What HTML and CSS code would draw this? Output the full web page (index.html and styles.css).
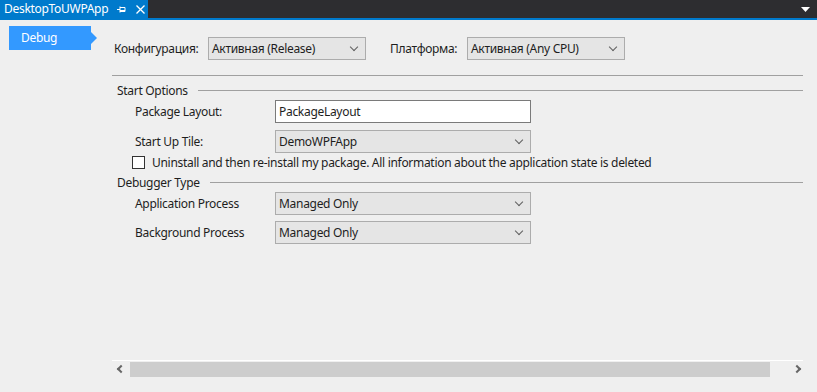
FILE: index.html
```html
<!DOCTYPE html>
<html lang="en">
<head>
    <meta charset="UTF-8">
    <meta name="viewport" content="width=device-width, initial-scale=1.0">
    <title>DesktopToUWPApp</title>
    <link rel="stylesheet" href="styles.css">
</head>
<body>
    <div class="tab-bar">
        <div class="doc-tab">
            <span class="doc-title">DesktopToUWPApp</span>
            <svg class="pin" width="9" height="9" viewBox="0 0 9 9">
                <path d="M0 4.5H3M3 1.5V7.5M3 2.5H8V6.5H3M3 5.5H8" stroke="#fff" stroke-width="1" fill="none"/>
            </svg>
            <svg class="close" width="9" height="9" viewBox="0 0 9 9">
                <path d="M0.5 0.5L8.5 8.5M8.5 0.5L0.5 8.5" stroke="#fff" stroke-width="1.3"/>
            </svg>
        </div>
        <div class="bar-fill">
            <svg class="menu-arrow" width="9" height="5" viewBox="0 0 9 5">
                <path d="M0 0H9L4.5 5Z" fill="#fff"/>
            </svg>
        </div>
    </div>
    <div class="tab-line"></div>

    <div class="page">
        <div class="sidebar">
            <div class="side-item">Debug</div>
        </div>

        <div class="content">
            <div class="config-row">
                <label class="config-label">Конфигурация:</label>
                <div class="select">Активная (Release)<span class="chev"></span></div>
                <label class="config-label platform">Платформа:</label>
                <div class="select">Активная (Any CPU)<span class="chev"></span></div>
            </div>
            <div class="rule"></div>

            <div class="group-head"><span>Start Options</span><div class="group-line"></div></div>
            <div class="field first">
                <label>Package Layout:</label>
                <div class="textbox">PackageLayout</div>
            </div>
            <div class="field">
                <label>Start Up Tile:</label>
                <div class="select wide">DemoWPFApp<span class="chev"></span></div>
            </div>
            <div class="check-row">
                <span class="checkbox"></span>
                <span>Uninstall and then re-install my package. All information about the application state is deleted</span>
            </div>

            <div class="group-head second"><span>Debugger Type</span><div class="group-line"></div></div>
            <div class="field first">
                <label>Application Process</label>
                <div class="select wide">Managed Only<span class="chev"></span></div>
            </div>
            <div class="field tight">
                <label>Background Process</label>
                <div class="select wide">Managed Only<span class="chev"></span></div>
            </div>

            <div class="spacer"></div>

            <div class="hscroll">
                <span class="arrow left"></span>
                <div class="thumb"></div>
                <span class="arrow right"></span>
            </div>
        </div>
    </div>
</body>
</html>
```

FILE: styles.css
```css
body {
    margin: 0;
    background-color: #efefef;
    font-family: "Noto Sans", "Open Sans", sans-serif;
    font-size: 12px;
    letter-spacing: -0.3px;
    color: #1e1e1e;
    height: 392px;
    overflow: hidden;
}
.tab-bar {
    display: flex;
    height: 18px;
}
.doc-tab {
    display: flex;
    align-items: center;
    width: 148px;
    background-color: #007acc;
    color: #fff;
    padding-left: 4px;
    box-sizing: border-box;
}
.doc-title {
    font-size: 12px;
    line-height: 18px;
}
.pin {
    margin-left: 9px;
}
.close {
    margin-left: 10px;
}
.bar-fill {
    flex: 1;
    background-color: #2d2d30;
    display: flex;
    align-items: center;
    justify-content: flex-end;
    padding-right: 7px;
}
.tab-line {
    height: 2px;
    background-color: #007acc;
}
.page {
    display: flex;
    height: 372px;
}
.sidebar {
    width: 112px;
    padding-top: 6px;
    padding-left: 9px;
    box-sizing: border-box;
}
.side-item {
    position: relative;
    width: 82px;
    height: 24px;
    line-height: 23px;
    background-color: #3399ff;
    color: #fff;
    padding-left: 12px;
    box-sizing: border-box;
    font-size: 12px;
}
.side-item::after {
    content: "";
    position: absolute;
    right: -6px;
    top: 6px;
    border-left: 6px solid #3399ff;
    border-top: 6px solid transparent;
    border-bottom: 6px solid transparent;
}
.content {
    width: 691px;
    display: flex;
    flex-direction: column;
}
.config-row {
    display: flex;
    align-items: center;
    margin-top: 17px;
    height: 23px;
}
.config-label {
    padding-left: 2px;
    width: 96px;
    box-sizing: border-box;
}
.config-label.platform {
    margin-left: 24px;
    width: 77px;
    padding-left: 0;
}
.select {
    position: relative;
    width: 158px;
    height: 23px;
    line-height: 21px;
    background-color: #e5e5e5;
    border: 1px solid #acacac;
    box-sizing: border-box;
    padding-left: 3px;
}
.select.wide {
    width: 256px;
}
.chev {
    position: absolute;
    right: 8px;
    top: 6px;
    width: 5px;
    height: 5px;
    border-right: 1px solid #5f5f5f;
    border-bottom: 1px solid #5f5f5f;
    transform: rotate(45deg);
}
.rule {
    height: 1px;
    background-color: #a0a0a0;
    margin-top: 15px;
}
.group-head {
    display: flex;
    align-items: center;
    height: 15px;
    margin-top: 7px;
    padding-left: 5px;
}
.group-head.second {
    margin-top: 6px;
}
.group-line {
    flex: 1;
    height: 1px;
    background-color: #a0a0a0;
    margin-left: 10px;
}
.field {
    display: flex;
    align-items: center;
    height: 23px;
    margin-top: 7px;
}
.field.first {
    margin-top: 2px;
}
.field.tight {
    margin-top: 6px;
}
.field label {
    width: 163px;
    padding-left: 23px;
    box-sizing: border-box;
}
.textbox {
    width: 256px;
    height: 23px;
    line-height: 21px;
    background-color: #fff;
    border: 1px solid #7a7a7a;
    box-sizing: border-box;
    padding-left: 3px;
}
.check-row {
    display: flex;
    align-items: center;
    height: 14px;
    margin-top: 2px;
    padding-left: 20px;
}
.checkbox {
    width: 11px;
    height: 11px;
    border: 1px solid #333;
    background-color: #fff;
    margin-right: 7px;
}
.spacer {
    flex: 1;
}
.hscroll {
    display: flex;
    align-items: center;
    height: 16px;
    border-top: 1px solid #fff;
    margin-bottom: 15px;
}
.thumb {
    width: 640px;
    height: 15px;
    background-color: #cdcdcd;
    margin-left: 6px;
}
.arrow {
    width: 4px;
    height: 4px;
    border-left: 2px solid #666;
    border-bottom: 2px solid #666;
}
.arrow.left {
    margin-left: 6px;
    transform: rotate(45deg);
}
.arrow.right {
    margin-left: 24px;
    transform: rotate(-135deg);
}
```
